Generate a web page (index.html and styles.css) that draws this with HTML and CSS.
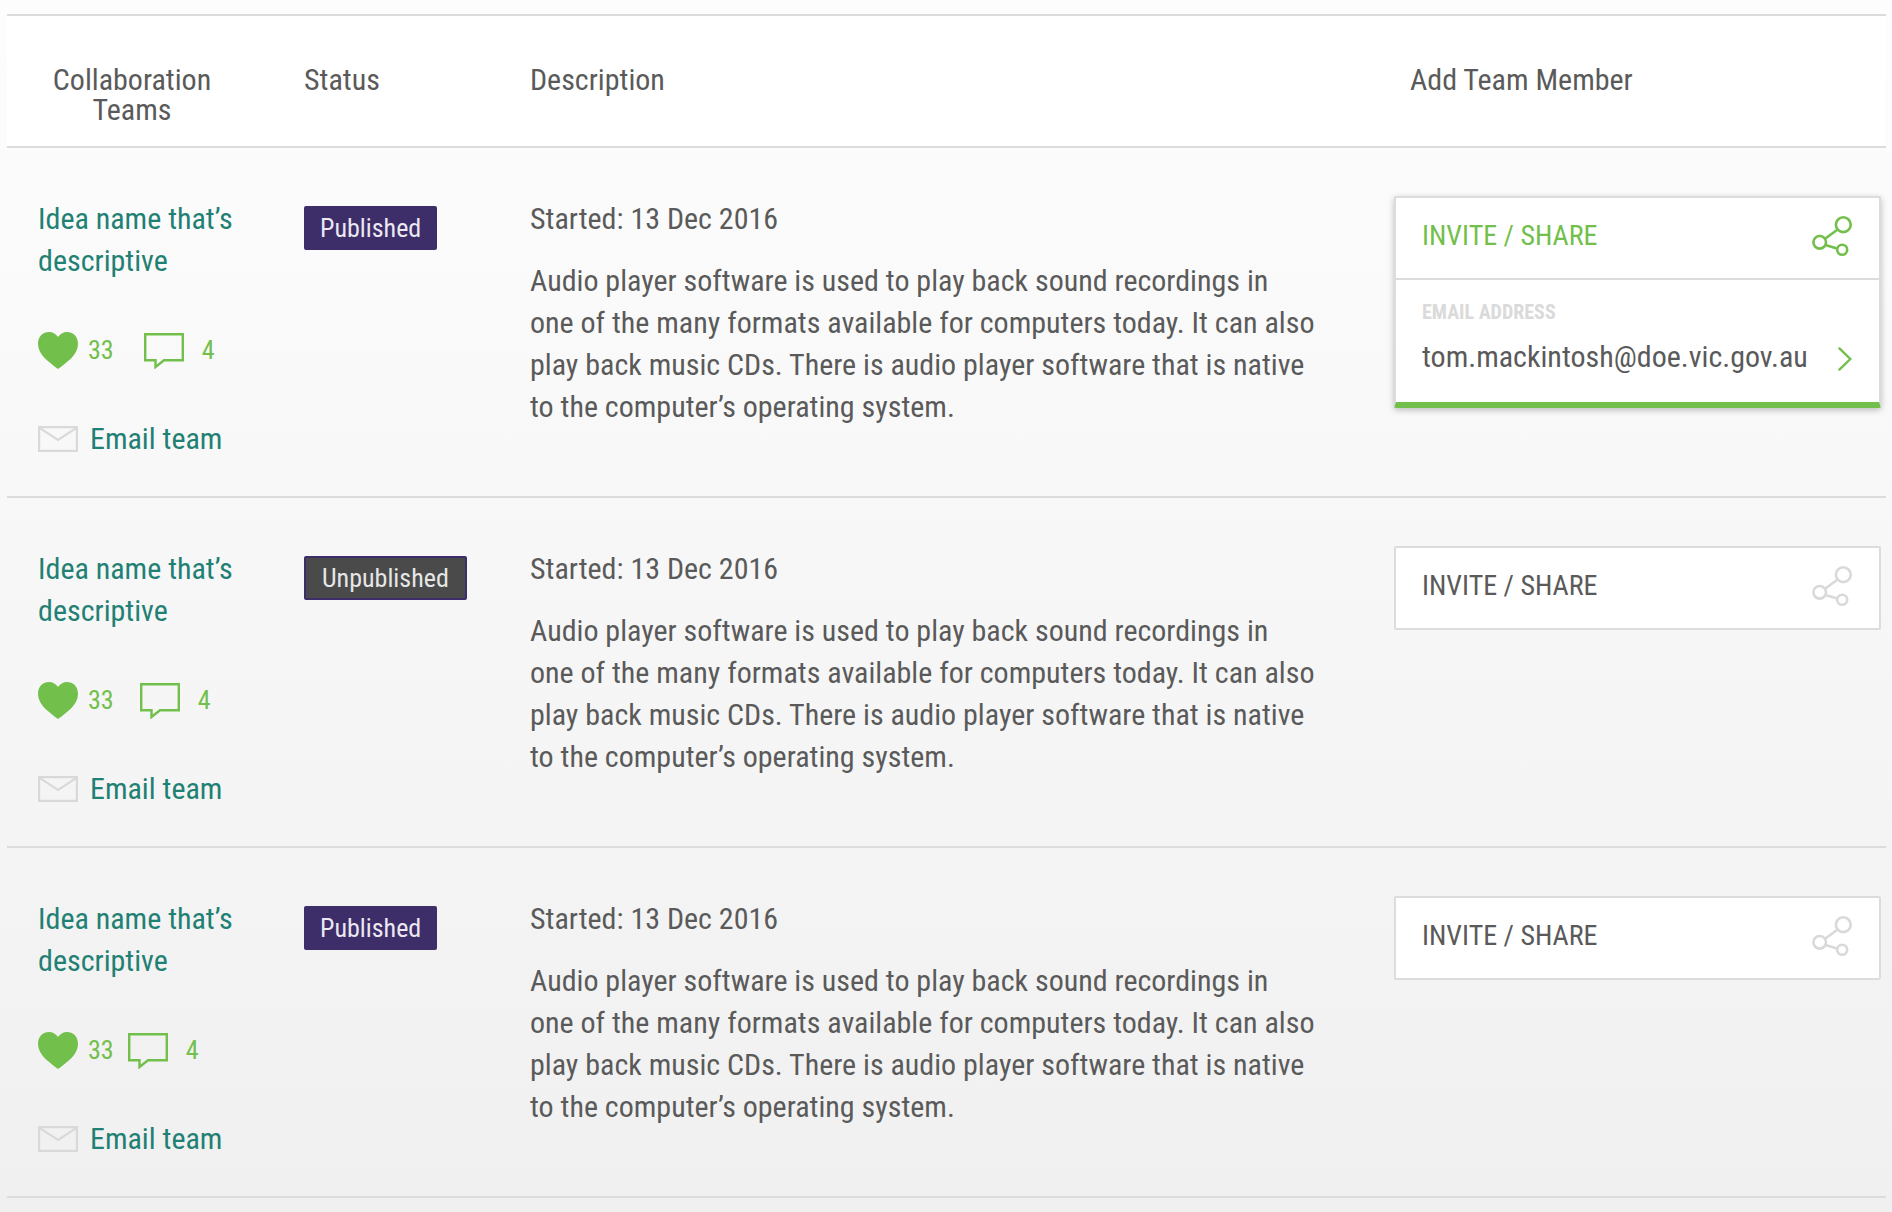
FILE: index.html
```html
<!DOCTYPE html>
<html lang="en">
<head>
<meta charset="utf-8">
<meta name="viewport" content="width=device-width, initial-scale=1">
<title>Collaboration Teams</title>
<link rel="stylesheet" href="styles.css">
</head>
<body>
<svg class="sprite" aria-hidden="true">
  <symbol id="heart" viewBox="0 0 40 37"><path fill="currentColor" d="M20 5C22 2 25 0 29 0c7 0 11 5 11 12 0 11-12 19-20 25C12 31 0 23 0 12 0 5 4 0 11 0c4 0 7 2 9 5z"/></symbol>
  <symbol id="comment" viewBox="0 0 40 37"><path fill="none" stroke="currentColor" stroke-width="2.400" d="M1.200 2.200h37.600v26H20L11.500 35v-6.800H1.200z"/></symbol>
  <symbol id="mail" viewBox="0 0 40 26"><path fill="none" stroke="currentColor" stroke-width="2.200" d="M1.100 1.100h37.800v23.800H1.100zM1.500 1.800L20 14 38.500 1.800"/></symbol>
  <symbol id="share" viewBox="0 0 40 40"><g fill="none" stroke="currentColor" stroke-width="2.600"><circle cx="31.300" cy="8.700" r="7.400"/><circle cx="7.700" cy="26.300" r="6.300"/><circle cx="30.200" cy="33.700" r="5"/><path d="M13 22.800l12-8.800M13.500 29l11.500 3.400"/></g></symbol>
  <symbol id="chevron" viewBox="0 0 14 24"><path fill="none" stroke="currentColor" stroke-width="2.400" stroke-linecap="round" d="M1.400 1.400L12.300 12 1.400 22.600"/></symbol>
</svg>
<main class="page">
<table class="teams">
  <colgroup><col class="col-team"><col class="col-status"><col><col class="col-share"></colgroup>
  <thead>
    <tr><th scope="col" class="head-team">Collaboration Teams</th><th scope="col">Status</th><th scope="col">Description</th><th scope="col" class="head-share">Add Team Member</th></tr>
  </thead>
  <tbody>
    <tr>
      <td class="team">
        <a class="idea" href="#">Idea name that’s descriptive</a>
        <div class="stats"><svg class="icon"><use href="#heart"/></svg><span class="likes likes-wide">33</span><svg class="icon"><use href="#comment"/></svg><span class="comments">4</span></div>
        <a class="email" href="#"><svg class="icon-mail"><use href="#mail"/></svg>Email team</a>
      </td>
      <td><span class="badge">Published</span></td>
      <td class="description"><p>Started: 13 Dec 2016</p><p>Audio player software is used to play back sound recordings in one of the many formats available for computers today. It can also play back music CDs. There is audio player software that is native to the computer’s operating system.</p></td>
      <td class="share-cell">
        <div class="share share-open">
          <button class="share-toggle" type="button" aria-expanded="true">INVITE / SHARE<svg class="icon-share"><use href="#share"/></svg></button>
          <form class="invite">
            <label for="invite-email">EMAIL ADDRESS</label>
            <div class="invite-row"><input id="invite-email" type="email" value="tom.mackintosh@doe.vic.gov.au"><button class="send" type="submit" aria-label="Send invitation"><svg class="icon-chevron"><use href="#chevron"/></svg></button></div>
          </form>
        </div>
      </td>
    </tr>
    <tr>
      <td class="team">
        <a class="idea" href="#">Idea name that’s descriptive</a>
        <div class="stats"><svg class="icon"><use href="#heart"/></svg><span class="likes likes-medium">33</span><svg class="icon"><use href="#comment"/></svg><span class="comments">4</span></div>
        <a class="email" href="#"><svg class="icon-mail"><use href="#mail"/></svg>Email team</a>
      </td>
      <td><span class="badge badge-off">Unpublished</span></td>
      <td class="description"><p>Started: 13 Dec 2016</p><p>Audio player software is used to play back sound recordings in one of the many formats available for computers today. It can also play back music CDs. There is audio player software that is native to the computer’s operating system.</p></td>
      <td class="share-cell">
        <div class="share"><button class="share-toggle" type="button" aria-expanded="false">INVITE / SHARE<svg class="icon-share"><use href="#share"/></svg></button></div>
      </td>
    </tr>
    <tr>
      <td class="team">
        <a class="idea" href="#">Idea name that’s descriptive</a>
        <div class="stats"><svg class="icon"><use href="#heart"/></svg><span class="likes">33</span><svg class="icon"><use href="#comment"/></svg><span class="comments">4</span></div>
        <a class="email" href="#"><svg class="icon-mail"><use href="#mail"/></svg>Email team</a>
      </td>
      <td><span class="badge">Published</span></td>
      <td class="description"><p>Started: 13 Dec 2016</p><p>Audio player software is used to play back sound recordings in one of the many formats available for computers today. It can also play back music CDs. There is audio player software that is native to the computer’s operating system.</p></td>
      <td class="share-cell">
        <div class="share"><button class="share-toggle" type="button" aria-expanded="false">INVITE / SHARE<svg class="icon-share"><use href="#share"/></svg></button></div>
      </td>
    </tr>
  </tbody>
</table>
</main>
</body>
</html>
```
FILE: styles.css
```css
:root {
  --text: #5a5a5a;
  --teal: #1f8074;
  --green: #72bf4b;
  --purple: #3d2d68;
  --line: #dcdcdc;
}
* { box-sizing: border-box; }
body {
  margin: 0;
  min-height: 100vh;
  background: linear-gradient(#fdfdfd, #f0f0f0);
  color: var(--text);
  font: 30px/42px "Roboto Condensed", "Liberation Sans Narrow", "Liberation Sans", sans-serif;
}
.sprite { display: none; }
svg { display: block; flex: none; }
.page { padding: 14px 6px 12px 7px; }
.teams {
  width: 100%;
  table-layout: fixed;
  border-collapse: separate;
  border-spacing: 0;
}
.col-team { width: 297px; }
.col-status { width: 226px; }
.col-share { width: 492px; }
th {
  height: 134px;
  padding: 49px 0 19px;
  border-top: 2px solid var(--line);
  border-bottom: 2px solid var(--line);
  background: #fff;
  font-weight: normal;
  line-height: 30px;
  text-align: left;
  vertical-align: top;
}
.head-team { padding-left: 31px; padding-right: 78px; text-align: center; }
.head-share { padding-left: 16px; }
td {
  height: 350px;
  padding: 50px 0 20px;
  border-bottom: 2px solid var(--line);
  vertical-align: top;
}
.team { padding-left: 31px; padding-right: 56px; }
a { color: var(--teal); text-decoration: none; }
.idea { display: block; }
.stats {
  display: flex;
  align-items: center;
  height: 42px;
  margin: 47px 0;
  color: var(--green);
  font-size: 26px;
}
.icon { width: 40px; height: 37px; }
.likes { padding: 0 14px 0 10px; }
.likes-medium { padding-right: 26px; }
.likes-wide { padding-right: 30px; }
.comments { padding-left: 18px; }
.email { display: flex; align-items: center; gap: 12px; }
.icon-mail { width: 40px; height: 26px; color: #d9d9d9; }
.badge {
  display: inline-block;
  margin-top: 8px;
  padding: 0 14px;
  border: 2px solid var(--purple);
  border-radius: 2px;
  background: var(--purple);
  color: #ebe8f2;
  font-size: 26px;
  line-height: 40px;
  vertical-align: top;
}
.badge-off { padding: 0 16px; background: #4a4a4a; color: #e6e6e6; }
.description { padding-right: 77px; }
p { margin: 0 0 20px; }
p:last-child { margin: 0; }
.share-cell { padding: 48px 5px 20px 0; }
.share {
  border: 2px solid var(--line);
  border-radius: 2px;
  background: #fff;
}
.share-open {
  border-bottom: 6px solid var(--green);
  box-shadow: 0 2px 6px rgba(0, 0, 0, 0.25);
}
.share-toggle {
  display: flex;
  align-items: center;
  justify-content: space-between;
  width: 100%;
  height: 80px;
  padding: 0 27px 4px 26px;
  border: 0;
  background: none;
  color: inherit;
  font: inherit;
  font-size: 28px;
}
.icon-share { width: 40px; height: 40px; color: #d9d9d9; }
.share-open .share-toggle,
.share-open .icon-share { color: var(--green); }
.invite {
  padding: 18px 27px 24px 26px;
  border-top: 2px solid var(--line);
}
label {
  display: block;
  color: #dadada;
  font-size: 20px;
  font-weight: bold;
  line-height: 28px;
}
.invite-row { display: flex; align-items: center; padding-top: 10px; }
input {
  flex: 1;
  min-width: 0;
  height: 42px;
  padding: 0;
  border: 0;
  background: none;
  color: inherit;
  font: inherit;
}
.send { padding: 4px 0 0; border: 0; background: none; color: var(--green); }
.icon-chevron { width: 14px; height: 24px; }
```
